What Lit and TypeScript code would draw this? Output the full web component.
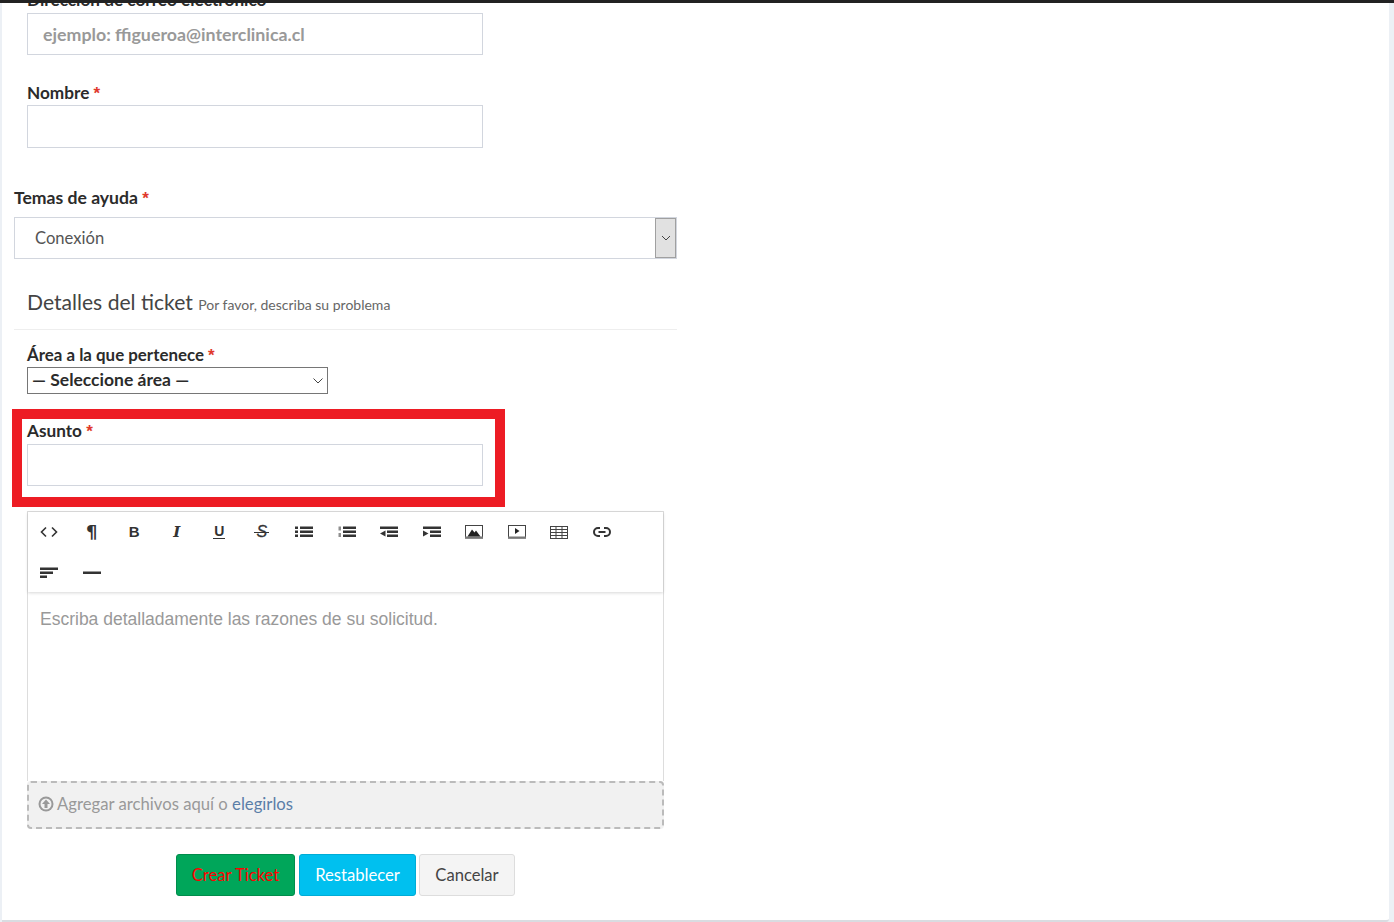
import { LitElement, html, svg, css } from "lit";
import { customElement } from "lit/decorators.js";

const bars = (x: number, w: number) => svg`
  <rect x=${x} y="0.5" width=${w} height="2.5"></rect>
  <rect x=${x} y="4.5" width=${w} height="2.5"></rect>
  <rect x=${x} y="8.5" width=${w} height="2.5"></rect>`;

const icons = [
  html`<svg viewBox="0 0 18 12" width="18" height="12"><path d="M6 1.500 1.500 6 6 10.500M12 1.500 16.500 6 12 10.500" fill="none" stroke="#333" stroke-width="1.6"></path></svg>`,
  html`<span class="gl para">¶</span>`,
  html`<span class="gl bold">B</span>`,
  html`<span class="gl ital">I</span>`,
  html`<span class="gl under">U</span>`,
  html`<span class="gl strike">S</span>`,
  html`<svg viewBox="0 0 18 12" width="18" height="12" fill="#333">${bars(5, 13)}<rect x="0" y="0.5" width="3" height="2.500"></rect><rect x="0" y="4.500" width="3" height="2.500"></rect><rect x="0" y="8.500" width="3" height="2.500"></rect></svg>`,
  html`<svg viewBox="0 0 18 12" width="18" height="12" fill="#333">${bars(5, 13)}<rect x="0.5" y="0.500" width="2.500" height="4" opacity=".55"></rect><rect x="0.500" y="7" width="2.500" height="4" opacity=".55"></rect></svg>`,
  html`<svg viewBox="0 0 18 12" width="18" height="12" fill="#333"><rect x="0" y="0.500" width="18" height="2.500"></rect><rect x="7" y="4.500" width="11" height="2.500"></rect><rect x="7" y="8.500" width="11" height="2.500"></rect><path d="M5.500 4.500v6L0 7.500z"></path></svg>`,
  html`<svg viewBox="0 0 18 12" width="18" height="12" fill="#333"><rect x="0" y="0.500" width="18" height="2.500"></rect><rect x="7" y="4.500" width="11" height="2.500"></rect><rect x="7" y="8.500" width="11" height="2.500"></rect><path d="M0 4.500v6l5.500-3z"></path></svg>`,
  html`<svg viewBox="0 0 18 14" width="18" height="14"><rect x=".5" y=".5" width="17" height="12.500" fill="#fff" stroke="#444"></rect><rect x="0" y="11.500" width="18" height="2" fill="#777"></rect><path d="M2.500 11.500 7 4.500l2.500 3L11 5.500l4.500 6z" fill="#222"></path></svg>`,
  html`<svg viewBox="0 0 18 14" width="18" height="14"><rect x=".5" y=".5" width="17" height="12.500" fill="#fff" stroke="#444"></rect><rect x="0" y="11.500" width="18" height="2" fill="#777"></rect><path d="M7 3v6l4.500-3z" fill="#222"></path></svg>`,
  html`<svg viewBox="0 0 18 13" width="18" height="13" fill="none" stroke="#444" stroke-width="1"><rect x=".5" y=".5" width="17" height="12"></rect><path d="M.5 3.500h17M.5 6.500h17M.5 9.500h17M6 .5v12M12 .5v12"></path></svg>`,
  html`<svg viewBox="0 0 18 12" width="18" height="12" fill="none" stroke="#333" stroke-width="2"><path d="M7 2H5a4 4 0 0 0 0 8h2M11 2h2a4 4 0 0 1 0 8h-2M5.500 6h7"></path></svg>`,
  html`<svg viewBox="0 0 18 12" width="18" height="12" fill="#333"><rect x="0" y="0.500" width="18" height="2.500"></rect><rect x="0" y="4.500" width="13" height="2.500"></rect><rect x="0" y="8.500" width="7" height="2.500"></rect></svg>`,
  html`<svg viewBox="0 0 18 12" width="18" height="12" fill="#333"><rect x="0" y="4.500" width="18" height="2.500"></rect></svg>`,
];

@customElement("app-root")
export class AppRoot extends LitElement {
  static styles = css`
    :host {
      display: block;
      height: 922px;
      overflow: hidden;
      background: #ecf0f5;
      font-family: "Lato", "Open Sans", sans-serif;
      color: #333;
    }
    .topbar { height: 3px; background: #222; }
    .card {
      height: 917px;
      margin: 0 5px 0 2px;
      background: #fff;
      border-bottom: 2px solid #d9dce1;
      border-bottom-right-radius: 3px;
      overflow: hidden;
    }
    .form {
      position: relative;
      width: 663px;
      margin: -14px 0 0 12px;
    }
    .field { margin-left: 13px; }
    label {
      display: block;
      height: 22px;
      line-height: 22px;
      font-size: 17.2px;
      font-weight: 700;
      color: #2b2b2b;
      white-space: nowrap;
    }
    .req { color: #e0382c; font-weight: 700; font-family: "Liberation Sans", sans-serif; font-size: 17px; }
    input {
      display: block;
      box-sizing: border-box;
      width: 456px;
      height: 42px;
      border: 1px solid #d2d6de;
      outline: none;
      padding: 0 15px;
      background: #fff;
      font-family: inherit;
      font-size: 17.8px;
      font-weight: 700;
    }
    input::placeholder { color: #999; opacity: 1; }
    .email input { margin-top: 2px; }
    .nombre { margin-top: 27px; }
    .nombre input { margin-top: 1px; height: 43px; }
    .temas { margin-top: 39px; }
    .temas label { font-size: 17.6px; }
    .combo {
      box-sizing: border-box;
      display: flex;
      align-items: center;
      height: 42px;
      margin-top: 8px;
      border: 1px solid #d2d6de;
      padding-left: 20px;
      font-size: 16.6px;
      color: #555;
    }
    .combo span { flex: 1; }
    .arrow {
      box-sizing: border-box;
      display: flex;
      align-items: center;
      justify-content: center;
      width: 21px;
      height: 40px;
      background: #e1e1e1;
      border: 1px solid #a0a0a0;
    }
    h3 {
      margin: 29px 0 0;
      padding-left: 13px;
      height: 30px;
      line-height: 28px;
      font-size: 21.1px;
      font-weight: 400;
      color: #444;
      white-space: nowrap;
    }
    h3 small { font-size: 14px; color: #666; }
    hr { margin: 11px 0 14px; border: 0; border-top: 1px solid #eee; }
    .area { font-size: 16.9px; }
    .selwrap { position: relative; width: 301px; margin-top: 1px; }
    select {
      display: block;
      box-sizing: border-box;
      width: 301px;
      height: 27px;
      border: 1px solid #767676;
      border-radius: 0;
      background: #fff;
      padding: 0 0 2px 4px;
      appearance: none;
      font-family: inherit;
      font-size: 17.5px;
      font-weight: 700;
      color: #2b2b2b;
    }
    .selwrap svg { position: absolute; right: 5px; top: 11px; pointer-events: none; }
    .asunto { margin-top: 26px; }
    .asunto input { margin-top: 2px; }
    .mark {
      position: absolute;
      left: -2px;
      top: 420px;
      box-sizing: border-box;
      width: 493px;
      height: 98px;
      border: 10px solid #ed1c24;
      pointer-events: none;
    }
    .editor {
      box-sizing: border-box;
      width: 637px;
      height: 270px;
      margin: 25px 0 0 13px;
      border: 1px solid #ddd;
      border-bottom: 0;
      display: flex;
      flex-direction: column;
    }
    .tools {
      display: grid;
      grid-template-columns: repeat(14, 42.5px);
      grid-auto-rows: 40px;
      height: 80px;
      box-shadow: 0 1px 3px rgba(0, 0, 0, 0.16);
    }
    .tool { display: flex; align-items: center; justify-content: center; color: #333; }
    .tool:nth-child(n + 15) { padding-top: 2px; }
    .gl { font-family: "Liberation Sans", sans-serif; line-height: 14px; color: #333; }
    .para { font-family: "DejaVu Sans", sans-serif; font-weight: 700; font-size: 18px; }
    .bold { font-weight: 700; font-size: 15px; }
    .ital { font-family: "DejaVu Serif", serif; font-style: italic; font-weight: 700; font-size: 15px; }
    .under { font-weight: 700; font-size: 14px; border-bottom: 1.5px solid #333; line-height: 13px; padding: 0 1px; }
    .strike { position: relative; font-weight: 400; font-style: italic; font-size: 16px; padding: 0 2px; -webkit-text-stroke: 0.3px #333; }
    .strike::after { content: ""; position: absolute; left: 0; right: 0; top: 7px; height: 1px; background: #333; }
    .text {
      flex: 1;
      padding: 15px 12px;
      font-family: "Liberation Sans", sans-serif;
      font-size: 17.5px;
      line-height: 24px;
      color: #999;
    }
    .drop {
      box-sizing: border-box;
      display: flex;
      align-items: center;
      gap: 3px;
      width: 637px;
      height: 48px;
      margin-left: 13px;
      padding: 0 9px 3px;
      background: #f1f1f1;
      border: 2px dashed #bbb;
      border-radius: 4px;
      font-size: 16.7px;
      color: #999;
    }
    .drop a { color: #5b7ea8; }
    .actions { display: flex; margin: 25px 0 0 162px; }
    button {
      box-sizing: border-box;
      height: 42px;
      padding: 0 0 1px;
      border: 1px solid;
      border-radius: 3px;
      font-family: inherit;
      font-size: 16.6px;
    }
    .ok { width: 119px; background: #00a65a; border-color: #008d4c; color: #f00; }
    .reset { width: 117px; margin-left: 4px; background: #00c0ef; border-color: #00acd6; color: #fff; }
    .cancel { width: 96px; margin-left: 3px; background: #f4f4f4; border-color: #ddd; color: #444; }
  `;

  render() {
    const req = html`<span class="req">*</span>`;
    return html`
      <div class="topbar"></div>
      <div class="card">
        <div class="form">
          <div class="field email">
            <label>Dirección de correo electrónico</label>
            <input placeholder="ejemplo: ffigueroa@interclinica.cl" />
          </div>
          <div class="field nombre">
            <label>Nombre ${req}</label>
            <input />
          </div>
          <div class="temas">
            <label>Temas de ayuda ${req}</label>
            <div class="combo">
              <span>Conexión</span>
              <div class="arrow">
                <svg viewBox="0 0 10 6" width="10" height="6"><path d="M1 1l4 4 4-4" fill="none" stroke="#444"></path></svg>
              </div>
            </div>
          </div>
          <h3>Detalles del ticket <small>Por favor, describa su problema</small></h3>
          <hr />
          <div class="field">
            <label class="area">Área a la que pertenece ${req}</label>
            <div class="selwrap">
              <select><option>— Seleccione área —</option></select>
              <svg viewBox="0 0 10 6" width="10" height="6"><path d="M.5.500l4.500 4.500 4.500-4.500" fill="none" stroke="#444"></path></svg>
            </div>
          </div>
          <div class="field asunto">
            <label>Asunto ${req}</label>
            <input />
          </div>
          <div class="mark"></div>
          <div class="editor">
            <div class="tools">${icons.map((i) => html`<div class="tool">${i}</div>`)}</div>
            <div class="text">Escriba detalladamente las razones de su solicitud.</div>
          </div>
          <div class="drop">
            <svg viewBox="0 0 16 16" width="16" height="16"><circle cx="8" cy="8" r="7.500" fill="#999"></circle><circle cx="8" cy="8" r="5.500" fill="#f1f1f1"></circle><path d="M8 3.500 12 8H9.500v4h-3V8H4z" fill="#999"></path></svg>
            <span>Agregar archivos aquí o <a>elegirlos</a></span>
          </div>
          <div class="actions">
            <button class="ok">Crear Ticket</button>
            <button class="reset">Restablecer</button>
            <button class="cancel">Cancelar</button>
          </div>
        </div>
      </div>
    `;
  }
}
